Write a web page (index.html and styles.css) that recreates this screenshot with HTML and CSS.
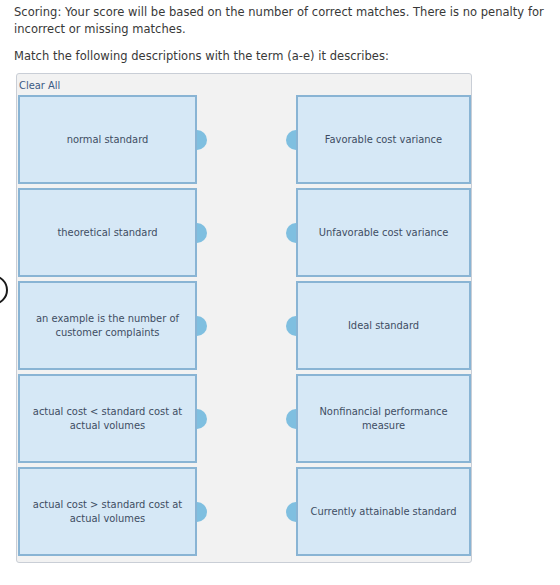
FILE: index.html
```html
<!DOCTYPE html>
<html>
<head>
<meta charset="utf-8">
<link rel="stylesheet" href="styles.css">
</head>
<body>
<span class="side-ring"></span>
<p class="intro">Scoring: Your score will be based on the number of correct matches. There is no penalty for incorrect or missing matches.</p>
<p class="prompt">Match the following descriptions with the term (a-e) it describes:</p>
<div class="matcher">
  <div class="toolbar"><a class="clear">Clear All</a></div>
  <div class="pairs">
    <div class="card left"><span>normal standard</span><i class="knob out"></i></div>
    <div class="card right"><i class="knob in"></i><span>Favorable cost variance</span></div>

    <div class="card left"><span>theoretical standard</span><i class="knob out"></i></div>
    <div class="card right"><i class="knob in"></i><span>Unfavorable cost variance</span></div>

    <div class="card left"><span>an example is the number of customer complaints</span><i class="knob out"></i></div>
    <div class="card right"><i class="knob in"></i><span>Ideal standard</span></div>

    <div class="card left"><span>actual cost &lt; standard cost at actual volumes</span><i class="knob out"></i></div>
    <div class="card right"><i class="knob in"></i><span>Nonfinancial performance measure</span></div>

    <div class="card left"><span>actual cost &gt; standard cost at actual volumes</span><i class="knob out"></i></div>
    <div class="card right"><i class="knob in"></i><span>Currently attainable standard</span></div>
  </div>
</div>
</body>
</html>
```
FILE: styles.css
```css
html, body {
  margin: 0;
  padding: 0;
  background: #ffffff;
}

body {
  position: relative;
  width: 560px;
  height: 585px;
  overflow: hidden;
  font-family: "DejaVu Sans", Verdana, sans-serif;
  color: #383838;
}

.intro,
.prompt {
  margin: 0;
  padding-left: 14px;
  font-size: 11.5px;
  line-height: 17px;
  letter-spacing: 0.03px;
}

.intro {
  padding-top: 4px;
  padding-right: 8px;
}

.prompt {
  margin-top: 10px;
}

/* ring peeking in from the left edge of the page */
.side-ring {
  position: absolute;
  left: -22px;
  top: 275px;
  width: 26px;
  height: 26px;
  border: 2.5px solid #1a1a1a;
  border-radius: 50%;
}

.matcher {
  margin: 8px 0 0 16px;
  width: 453px;
  border: 1px solid #c9ced6;
  border-radius: 3px;
  background: #f2f2f2;
  padding: 0 0 6px 1px;
}

.toolbar {
  height: 21px;
  padding: 0 0 0 1px;
  box-sizing: border-box;
}

.clear {
  font-family: "DejaVu Sans Condensed", "DejaVu Sans", sans-serif;
  font-size: 11px;
  color: #3b5a84;
  line-height: 18px;
}

.pairs {
  display: grid;
  grid-template-columns: 179px 175px;
  justify-content: space-between;
  row-gap: 4px;
}

.card {
  position: relative;
  height: 89px;
  box-sizing: border-box;
  border: 2px solid #89b4d4;
  background: #d6e8f6;
  display: flex;
  align-items: center;
  justify-content: center;
  text-align: center;
  font-family: "DejaVu Sans Condensed", "DejaVu Sans", sans-serif;
  font-size: 11px;
  line-height: 14px;
  color: #3e4d63;
  padding: 0 10px;
}

.knob {
  position: absolute;
  top: 50%;
  width: 10px;
  height: 20px;
  margin-top: -10px;
  background: #7fbfe0;
}

.knob.out {
  right: -12px;
  border-radius: 0 10px 10px 0;
}

.knob.in {
  left: -12px;
  border-radius: 10px 0 0 10px;
}
```
